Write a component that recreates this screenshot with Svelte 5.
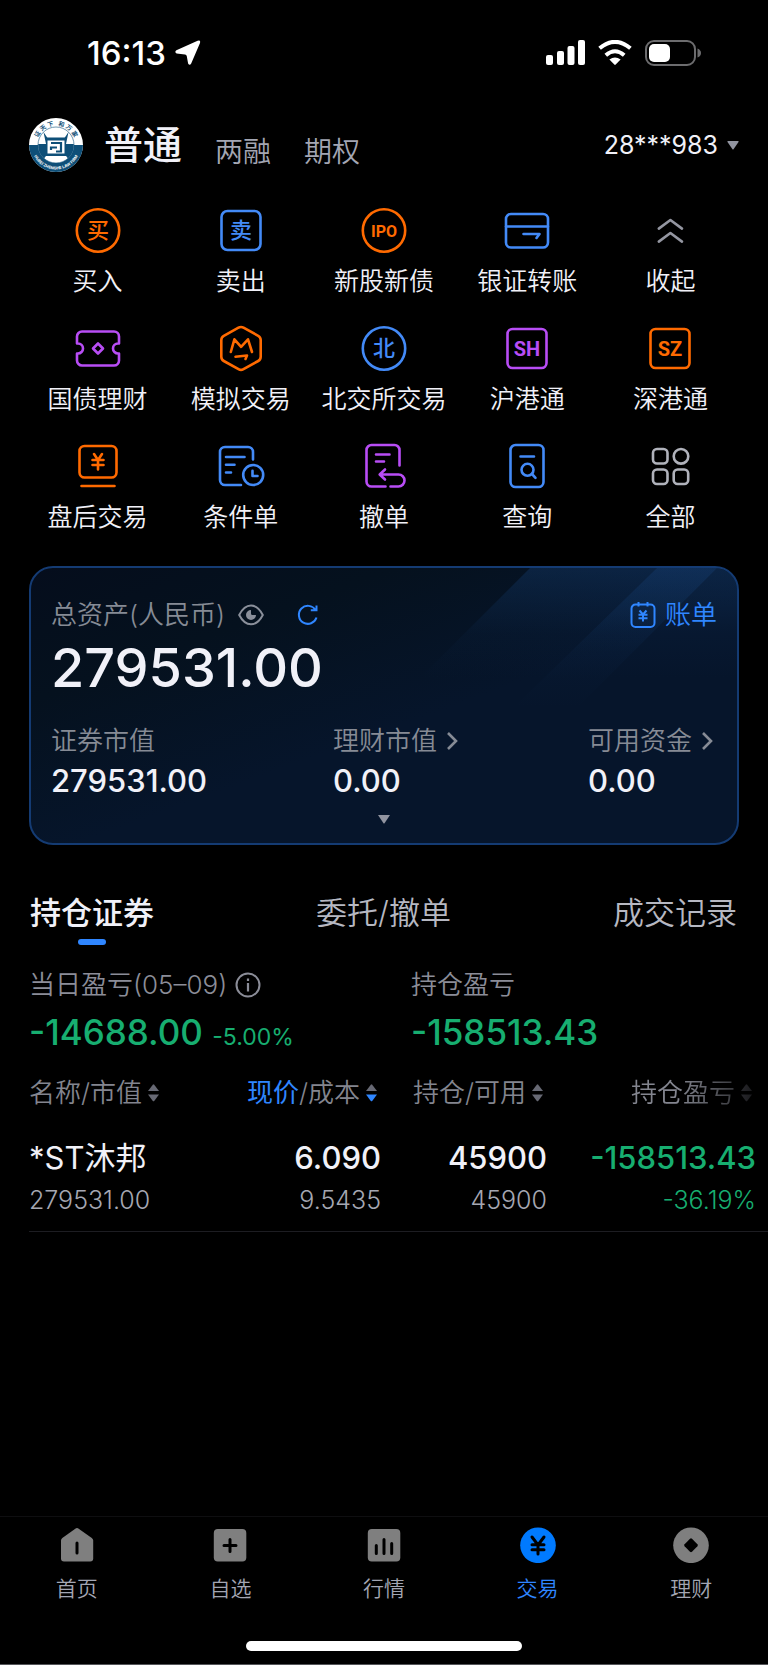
<script>
  const orange = '#ff6a00';
  const blue = '#438af7';
  const purple = '#b84df5';

  const actions = [
    { id: 'buy', label: '买入', color: orange },
    { id: 'sell', label: '卖出', color: blue },
    { id: 'ipo', label: '新股新债', color: orange },
    { id: 'transfer', label: '银证转账', color: blue },
    { id: 'collapse', label: '收起', color: '#9496a1' },
    { id: 'bond', label: '国债理财', color: purple },
    { id: 'mock', label: '模拟交易', color: orange },
    { id: 'bse', label: '北交所交易', color: blue },
    { id: 'sh', label: '沪港通', color: purple },
    { id: 'sz', label: '深港通', color: orange },
    { id: 'after', label: '盘后交易', color: orange },
    { id: 'condition', label: '条件单', color: blue },
    { id: 'cancel', label: '撤单', color: purple },
    { id: 'query', label: '查询', color: blue },
    { id: 'all', label: '全部', color: '#b0b2bb' }
  ];

  const metrics = [
    { label: '证券市值', value: '279531.00', link: false },
    { label: '理财市值', value: '0.00', link: true },
    { label: '可用资金', value: '0.00', link: true }
  ];

  const columns = [
    { active: '', label: '名称/市值' },
    { active: '现价', label: '/成本' },
    { active: '', label: '持仓/可用' },
    { active: '', label: '持仓盈亏' }
  ];

  const holdings = [
    { name: '*ST沐邦', value: '279531.00', price: '6.090', cost: '9.5435', held: '45900', usable: '45900', profit: '-158513.43', rate: '-36.19%' }
  ];

  const tabs = ['持仓证券', '委托/撤单', '成交记录'];
  let tab = $state('持仓证券');

  const nav = [
    { id: 'home', label: '首页' },
    { id: 'watch', label: '自选' },
    { id: 'market', label: '行情' },
    { id: 'trade', label: '交易' },
    { id: 'wealth', label: '理财' }
  ];
</script>

{#snippet actionIcon(id)}
  <svg class="action-icon" viewBox="0 0 48 48" aria-hidden="true">
    {#if id === 'buy'}
      <circle cx="24" cy="23.5" r="21.2" />
      <text class="han" x="24" y="31">买</text>
    {:else if id === 'sell'}
      <rect x="4.5" y="4" width="39" height="39" rx="6" />
      <text class="han" x="24" y="31">卖</text>
    {:else if id === 'ipo'}
      <circle cx="24" cy="23.5" r="21.2" />
      <text class="latin small" x="24" y="29.5">IPO</text>
    {:else if id === 'transfer'}
      <rect x="3" y="7" width="42" height="33.5" rx="5" />
      <path d="M3 19.5H45M20.5 27H36.5L33.5 31" />
    {:else if id === 'collapse'}
      <path d="M12.8 21.6L24.4 13L36 21.6M12.8 34.6L24.4 26L36 34.6" />
    {:else if id === 'bond'}
      <path d="M8 6.5H40A5 5 0 0 1 45 11.5V18.5H44A5 5 0 0 0 44 28.5H45V35.5A5 5 0 0 1 40 40.500H8A5 5 0 0 1 3 35.5V28.500H4A5 5 0 0 0 4 18.5H3V11.5A5 5 0 0 1 8 6.5Z" />
      <path d="M24 18.500L29 23.5L24 28.500L19 23.5Z" />
    {:else if id === 'mock'}
      <path d="M21.5 2.700A5 5 0 0 1 26.500 2.700L41.200 10.800A5 5 0 0 1 43.700 15.100V31.700A5 5 0 0 1 41.200 36L26.500 44.200A5 5 0 0 1 21.500 44.200L6.800 36A5 5 0 0 1 4.300 31.700V15.100A5 5 0 0 1 6.800 10.800Z" />
      <path d="M13.800 27L17.400 14.300L24.100 21.800L31 14.300L35 27M18.500 31.700L30 30.500L28.500 34" />
    {:else if id === 'bse'}
      <circle cx="24" cy="23.5" r="21.2" />
      <text class="han" x="24" y="31">北</text>
    {:else if id === 'sh'}
      <rect x="4.5" y="4" width="39" height="39" rx="5" />
      <text class="latin" x="24" y="31">SH</text>
    {:else if id === 'sz'}
      <rect x="4.5" y="4" width="39" height="39" rx="5" />
      <text class="latin" x="24" y="31">SZ</text>
    {:else if id === 'after'}
      <rect x="5.500" y="3" width="37" height="31.500" rx="5" />
      <path d="M7.500 43H40.500M20 11L24 17L28 11M24 17V26.500M18.500 17H29.500M18.500 22H29.500" />
    {:else if id === 'condition'}
      <path d="M36 16.500V9A5 5 0 0 0 31 4H8A5 5 0 0 0 3 9V37A5 5 0 0 0 8 42H24" />
      <path d="M9 14H27.500M9 21.700H17.500M9 29.500H14" />
      <circle cx="36.200" cy="32" r="10" />
      <path d="M35.500 27.800V33H40.500" />
    {:else if id === 'cancel'}
      <path d="M39.500 22.500V7A5 5 0 0 0 34.500 2H11.500A5 5 0 0 0 6.500 7V38.500A5 5 0 0 0 11.500 43.500H25.500" />
      <path d="M16 11.500H29.500M16 18.500H24M25 26.500L19.700 31.500L25 36.500M20 31.500H38.500A6 6 0 0 1 38.500 43.500H30.500" />
    {:else if id === 'query'}
      <rect x="7.500" y="2" width="33" height="42" rx="5" />
      <path d="M17.500 13.500H31M29 31L32.500 34.800" />
      <circle cx="24.500" cy="26.800" r="6" />
    {:else}
      <rect x="7" y="6" width="14.500" height="14.500" rx="4" />
      <circle cx="35" cy="13.300" r="7.300" />
      <rect x="7" y="26.500" width="14.500" height="14.500" rx="4" />
      <rect x="27.700" y="26.500" width="14.500" height="14.500" rx="4" />
    {/if}
  </svg>
{/snippet}

{#snippet navIcon(id)}
  <svg class="nav-icon" viewBox="0 0 36 36" aria-hidden="true">
    {#if id === 'home'}
      <path d="M16.300 1.700Q18 .5 19.700 1.700L32.800 11Q34.200 12 34.200 13.500V31.500Q34.200 34.500 31.200 34.500H5Q2 34.500 2 31.500V13.500Q2 12 3.300 11Z" />
      <path class="cut" d="M18 16V26" />
    {:else if id === 'watch'}
      <rect x="1.800" y="2" width="32.500" height="32.500" rx="4" />
      <path class="cut" d="M18 12.500V24.500M12 18.500H24" />
    {:else if id === 'market'}
      <rect x="1.800" y="2" width="32.500" height="32.500" rx="4" />
      <path class="cut" d="M10.300 18.500V26.500M18 12.500V26.500M25.700 16.500V26.500" />
    {:else if id === 'trade'}
      <circle cx="18" cy="18.300" r="17.800" />
      <path class="cut" d="M12 10L18 18L24 10M18 18V27M12 17.800H24M12 22.800H24" />
    {:else}
      <circle cx="18" cy="18.300" r="17.800" />
      <path class="hole" d="M17 11.800Q18 10.900 19 11.800L24.400 17.300Q25.300 18.300 24.400 19.300L19 24.700Q18 25.600 17 24.700L11.600 19.300Q10.700 18.300 11.600 17.300Z" />
    {/if}
  </svg>
{/snippet}

{#snippet chevron()}
  <svg class="chevron" viewBox="0 0 16 20" aria-hidden="true"><path d="M2 2L10 10L2 18" /></svg>
{/snippet}

<div class="screen">
  <div class="status">
    <span class="time">16:13</span>
    <svg class="locate" viewBox="0 0 26 26" aria-hidden="true"><path d="M22.600 .8Q25.800 -.2 25 2.900L16.200 23.600Q14.600 26 13.100 23.500L11.800 16.200Q11.500 14.700 10 14.500L1.600 13.400Q-.8 12.200 1.400 10.300Z" /></svg>
    <div class="signals">
      <svg width="39" height="26" viewBox="0 0 39 26" aria-hidden="true">
        <rect x="0" y="15" width="7" height="10" rx="2" /><rect x="11" y="11" width="7" height="14" rx="2" />
        <rect x="21.500" y="6" width="7" height="19" rx="2" /><rect x="32" y="0" width="7" height="25" rx="2" />
      </svg>
      <svg width="34" height="26" viewBox="0 0 34 26" aria-hidden="true">
        <path class="wave" d="M1.600 8.300Q17 -4.600 32.400 8.300M7.800 15.200Q17 7.300 26.200 15.200" />
        <path d="M11.400 19.600Q17 15.200 22.600 19.600L17.700 24.600Q17 25.200 16.300 24.600Z" />
      </svg>
      <svg width="56" height="26" viewBox="0 0 56 26" aria-hidden="true">
        <rect class="shell" x="1" y="1" width="49" height="24" rx="8" />
        <rect x="4" y="4" width="21" height="18" rx="5" />
        <path class="nub" d="M52.500 8.500Q56 10 56 13Q56 16 52.500 17.500Z" />
      </svg>
    </div>
  </div>

  <header>
    <svg class="avatar" viewBox="0 0 54 54" role="img" aria-label="HUBEI ZHENGHE LAW FIRM">
      <defs>
        <path id="arc-top" d="M7.500 27A19.500 19.500 0 0 1 46.500 27" />
        <path id="arc-bottom" d="M2.500 27A24.500 24.500 0 0 0 51.500 27" />
      </defs>
      <circle cx="27" cy="27" r="27" fill="#fff" />
      <path d="M0 27H54A27 27 0 0 1 0 27Z" fill="#0e4f78" />
      <circle cx="27" cy="27" r="18" fill="#fff" stroke="#0e4f78" stroke-width=".6" />
      <path d="M14.500 14L18.500 20V36L15 40.500A18 18 0 0 1 9.200 26H17ZM39.500 14L35.500 20V36L39 40.500A18 18 0 0 0 44.800 26H37Z" fill="#0e4f78" />
      <path d="M17 19.500H37V22.500H17ZM17 35.500H37V38H17Z" fill="#0e4f78" />
      <path d="M22 25H32V33.500H27M22 32V29.500H28" fill="none" stroke="#0e4f78" stroke-width="2.200" />
      <text class="seal-han"><textPath href="#arc-top" startOffset="50%">证 天 下&#160;&#160;&#160;和 万 家</textPath></text>
      <text class="seal-latin"><textPath href="#arc-bottom" startOffset="50%">HUBEI ZHENGHE LAW FIRM</textPath></text>
    </svg>
    <button class="mode current">普通</button>
    <button class="mode">两融</button>
    <button class="mode">期权</button>
    <button class="account">28***983
      <svg width="12" height="9" viewBox="0 0 12 9" aria-hidden="true"><path d="M1 0H11Q12 0 11.500 1L6.700 8Q6 9 5.300 8L.5 1Q0 0 1 0Z" /></svg>
    </button>
  </header>

  <section class="actions" aria-label="交易功能">
    {#each actions as a}
      <button style:--tint={a.color}>
        {@render actionIcon(a.id)}
        <span>{a.label}</span>
      </button>
    {/each}
  </section>

  <section class="card">
    <svg class="beams" viewBox="0 0 320 160" aria-hidden="true">
      <defs>
        <linearGradient id="beam" x1="0" y1="0" x2="0" y2="1">
          <stop offset="0" stop-color="#164178" stop-opacity=".36" />
          <stop offset=".6" stop-color="#164178" stop-opacity=".07" />
          <stop offset="1" stop-color="#164178" stop-opacity="0" />
        </linearGradient>
      </defs>
      <path d="M113 0H320V110H3Z" fill="url(#beam)" />
      <path d="M240 0H300L160 140H96Z" fill="url(#beam)" />
    </svg>
    <div class="card-top">
      <span class="muted">总资产(人民币)</span>
      <button class="eye" aria-label="隐藏资产">
        <svg width="26" height="22" viewBox="0 0 26 22"><path d="M1.200 11Q6 1.500 13 1.500T24.800 11Q20 20.300 13 20.300T1.200 11Z" fill="none" stroke="#8a8f9a" stroke-width="2" /><path d="M13 6A5 5 0 1 0 18 11H14.500A1.500 1.500 0 0 1 13 9.500Z" fill="#8a8f9a" /></svg>
      </button>
      <button aria-label="刷新">
        <svg width="22" height="22" viewBox="0 0 22 22"><path d="M19.500 13.500A9 9 0 1 1 18.500 6M13.800 6.300H19.500V1.500" fill="none" stroke="#2f86ff" stroke-width="2" /></svg>
      </button>
      <a class="bill" href="#bill">
        <svg width="26" height="28" viewBox="0 0 26 28" aria-hidden="true"><path d="M5.500 3.500A4 4 0 0 0 1.500 7.500V22A4 4 0 0 0 5.500 26H20.500A4 4 0 0 0 24.500 22V7.500A4 4 0 0 0 20.500 3.500ZM8.500 1V5.500M17.500 1V5.500M9.500 9.500L13 13.500L16.500 9.500M13 13.500V20.500M8.500 13.800H17.500M8.500 17.300H17.500" /></svg>
        账单
      </a>
    </div>
    <div class="total">279531.00</div>
    <div class="metrics">
      {#each metrics as m}
        <div>
          <div class="muted metric-label">{m.label}{#if m.link}{@render chevron()}{/if}</div>
          <div class="metric-value">{m.value}</div>
        </div>
      {/each}
    </div>
    <button class="expand" aria-label="展开">
      <svg width="12" height="9" viewBox="0 0 12 9"><path d="M0 0H12L6.700 8Q6 9 5.300 8Z" fill="#9194a0" /></svg>
    </button>
  </section>

  <div class="tabs" role="tablist">
    {#each tabs as t}
      <button role="tab" aria-selected={tab === t} onclick={() => (tab = t)}>{t}</button>
    {/each}
  </div>

  <section class="summary">
    <div>
      <div class="label">当日盈亏(05–09)
        <svg width="26" height="26" viewBox="0 0 26 26" aria-hidden="true"><circle cx="13" cy="13" r="11.500" fill="none" stroke="#8b8d98" stroke-width="2" /><path d="M13 11V19.500M13 6.500V9" stroke="#8b8d98" stroke-width="2.200" /></svg>
      </div>
      <div class="figure">-14688.00 <small>-5.00%</small></div>
    </div>
    <div>
      <div class="label">持仓盈亏</div>
      <div class="figure">-158513.43</div>
    </div>
  </section>

  <table>
    <colgroup><col /><col class="c2" /><col class="c3" /><col class="c4" /></colgroup>
    <thead>
      <tr>
        {#each columns as c}
          <th scope="col">
            <button>
              <span>{#if c.active}<b>{c.active}</b>{/if}{c.label}</span>
              <svg width="11" height="18" viewBox="0 0 11 18" aria-hidden="true">
                <path d="M0 7L4.800 .7Q5.500 0 6.200 .7L11 7Z" />
                <path class:on={c.active} d="M0 10.500H11L6.200 17Q5.500 17.700 4.800 17Z" />
              </svg>
            </button>
          </th>
        {/each}
      </tr>
    </thead>
    <tbody>
      {#each holdings as h}
        <tr>
          <td><div class="main name">{h.name}</div><div class="sub">{h.value}</div></td>
          <td><div class="main">{h.price}</div><div class="sub">{h.cost}</div></td>
          <td><div class="main">{h.held}</div><div class="sub">{h.usable}</div></td>
          <td class="loss"><div class="main">{h.profit}</div><div class="sub">{h.rate}</div></td>
        </tr>
      {/each}
    </tbody>
  </table>

  <footer>
    <nav>
      {#each nav as n}
        <a href={'#' + n.id} class:selected={n.id === 'trade'}>
          {@render navIcon(n.id)}
          <span>{n.label}</span>
        </a>
      {/each}
    </nav>
    <div class="indicator"></div>
  </footer>
</div>

<style>
  :global(body) { margin: 0; background: #000; }
  .screen {
    display: flex;
    flex-direction: column;
    min-height: 100vh;
    box-sizing: border-box;
    border-bottom: 1px solid #55565a;
    background: #000;
    color: #f1f1f8;
    font-family: Inter, "Noto Sans CJK SC", sans-serif;
    font-size: 25px;
    font-weight: 350;
    line-height: 34px;
    white-space: nowrap;
    overflow-x: hidden;
  }
  button {
    padding: 0;
    border: 0;
    background: none;
    color: inherit;
    font: inherit;
    cursor: pointer;
  }
  a { color: inherit; text-decoration: none; }
  svg { display: block; flex: none; }

  .status { display: flex; align-items: center; height: 42px; padding: 32px 67px 0 87px; color: #fff; }
  .status svg { fill: #fff; }
  .time { font-size: 33px; font-weight: 500; }
  .locate { width: 26px; height: 26px; margin-left: 9px; }
  .signals { display: flex; gap: 13px; margin-left: auto; }
  .status .wave { fill: none; stroke: #fff; stroke-width: 4; }
  .status .shell { fill: none; stroke: #6c6c6e; stroke-width: 2; }
  .status .nub { fill: #6c6c6e; }

  header { display: flex; align-items: center; height: 54px; margin: 44px 29px 0; }
  .avatar { width: 54px; height: 54px; }
  .seal-han, .seal-latin { text-anchor: middle; fill: #0e4f78; font-size: 6px; font-weight: 700; }
  .seal-latin { fill: #fff; font-size: 4px; }
  .mode { margin: 13px 0 0 33px; color: #a3a6b3; font-size: 28px; }
  .mode.current { margin: 0 0 0 21px; color: #f1f1f8; font-size: 39px; font-weight: 500; }
  .account { display: flex; align-items: center; gap: 9px; margin-left: auto; font-weight: 400; }
  .account svg { fill: #9194a0; }

  .actions { display: grid; grid-template-columns: repeat(5, 1fr); row-gap: 27px; margin: 35px 26px 0; }
  .actions button { display: flex; flex-direction: column; align-items: center; gap: 9px; }
  .action-icon { width: 48px; height: 48px; fill: none; stroke: var(--tint); stroke-width: 2.6; stroke-linecap: round; stroke-linejoin: round; }
  .action-icon text { fill: var(--tint); stroke: none; text-anchor: middle; }
  .action-icon .han { font-size: 22px; font-weight: 500; }
  .action-icon .latin { font-family: Roboto, sans-serif; font-size: 20px; font-weight: 700; }
  .action-icon .small { font-size: 16px; }

  .card {
    position: relative;
    overflow: hidden;
    margin: 32px 29px 0;
    padding: 30px 20px 19px;
    border: 2px solid #143b73;
    border-radius: 24px;
    background: linear-gradient(160deg, #050d1c 0%, #05111e 25%, #06152b 55%, #06152b 100%);
  }
  .beams { position: absolute; top: 0; right: 0; width: 320px; height: 160px; }
  .card-top { position: relative; display: flex; align-items: center; }
  .muted { color: #868b95; font-size: 26px; }
  .eye { margin: 0 33px 0 13px; }
  .bill { display: flex; align-items: center; gap: 9px; margin-left: auto; color: #2f86ff; font-size: 26px; }
  .bill svg { fill: none; stroke: #2f86ff; stroke-width: 2; }
  .total { margin-top: 8px; font-size: 54px; font-weight: 500; line-height: 56px; }
  .metrics { display: flex; justify-content: space-between; margin-top: 28px; }
  .metric-label { display: flex; align-items: center; gap: 9px; }
  .metric-value { margin-top: 6px; font-size: 31px; font-weight: 500; }
  .chevron { width: 16px; height: 20px; fill: none; stroke: #868b95; stroke-width: 2.6; }
  .expand { display: block; margin: 17px auto 0; }

  .tabs { display: flex; justify-content: space-between; margin: 48px 31px 0 30px; }
  .tabs button { color: #b6b8c2; font-size: 31px; line-height: 40px; }
  .tabs button::after { content: ""; display: block; width: 28px; height: 6px; margin: 6px auto 0; border-radius: 3px; }
  .tabs [aria-selected="true"] { color: #f1f1f8; font-weight: 500; }
  .tabs [aria-selected="true"]::after { background: #2f86ff; }

  .summary { display: grid; grid-template-columns: 382px 1fr; margin: 23px 29px 0; color: #8b8d98; }
  .label { display: flex; align-items: center; gap: 8px; font-size: 26px; }
  .figure { margin-top: 8px; color: #17ae70; font-size: 35px; font-weight: 500; line-height: 44px; }
  small { font-size: 23px; font-weight: 400; line-height: 1; }

  table { width: calc(100% - 29px); margin: 22px 0 0 29px; border-collapse: collapse; table-layout: fixed; }
  .c2 { width: 172px; }
  .c3 { width: 166px; }
  .c4 { width: 221px; }
  th, td { padding: 0; font-weight: 350; text-align: right; }
  th:first-child, td:first-child { text-align: left; }
  th button { display: inline-flex; align-items: center; gap: 6px; padding-right: 4px; color: #83858f; font-size: 26px; vertical-align: top; }
  th b { color: #2f86ff; font-weight: 400; }
  th svg { fill: #676974; }
  th .on { fill: #2f86ff; }
  th:last-child, td:last-child { padding-right: 12px; }
  th:last-child { mask-image: linear-gradient(to right, #000 calc(100% - 90px), rgba(0, 0, 0, 0.1)); }
  td { padding: 29px 0 14px; border-bottom: 1px solid #1d1d22; }
  .main { font-size: 31px; font-weight: 500; line-height: 38px; }
  .name { font-weight: 400; }
  .sub { margin-top: 6px; color: #a5a7b2; }
  .loss, .loss .sub { color: #17ae70; }

  footer { margin-top: auto; padding-bottom: 13px; border-top: 1px solid #0e0e10; }
  nav { display: grid; grid-template-columns: repeat(5, 1fr); padding-top: 10px; }
  nav a { display: flex; flex-direction: column; align-items: center; gap: 12px; color: #a3a6b3; font-size: 21px; line-height: 28px; }
  .nav-icon { width: 36px; height: 36px; fill: #7f7f7f; }
  .cut { fill: none; stroke: #000; stroke-width: 3; stroke-linecap: round; }
  .hole { fill: #000; }
  .selected { color: #2f86ff; }
  .selected .nav-icon { fill: #007aff; }
  .indicator { width: 36%; height: 10px; margin: 38px auto 0; border-radius: 5px; background: #fff; }
</style>
